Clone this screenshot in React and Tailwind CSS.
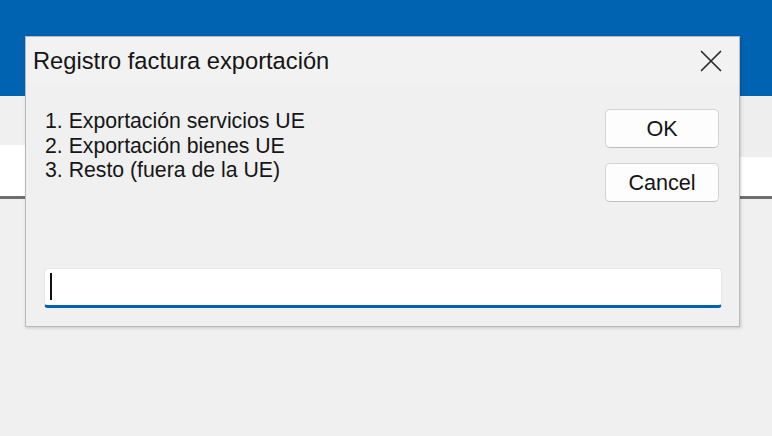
import React from "react";

const font = { fontFamily: '"Liberation Sans", Arial, sans-serif' };

function CloseIcon() {
  return (
    <svg width="22" height="22" viewBox="0 0 22 22" className="mt-[2px] shrink-0">
      <path d="M1.5 1.5 L20.5 20.5 M20.5 1.5 L1.5 20.5" stroke="#2b2b2b" strokeWidth="1.7" strokeLinecap="round" />
    </svg>
  );
}

function DialogButton({ children }) {
  return (
    <button className="h-[39px] w-[114px] rounded-[5px] border border-[#d3d3d3] border-b-[#bdbdbd] bg-[#fdfdfd] text-[21.6px] leading-none text-[#141414]">
      {children}
    </button>
  );
}

export default function App() {
  const options = [
    "1. Exportación servicios UE",
    "2. Exportación bienes UE",
    "3. Resto (fuera de la UE)",
  ];

  return (
    <div className="relative h-[436px] w-[772px] overflow-hidden bg-[#f0f0f0]" style={font}>
      {/* Background application window */}
      <div className="h-[96px] bg-[#0063b1]" />
      <div className="flex h-[100px]">
        <div className="flex w-[25px] flex-col">
          <div className="h-[49px] bg-[#f0f0f0]" />
          <div className="flex-1 bg-white" />
        </div>
        <div className="flex-1" />
        <div className="flex w-[32px] flex-col">
          <div className="h-[61px] bg-[#eeeeee]" />
          <div className="flex-1 bg-white" />
        </div>
      </div>
      <div className="h-[3px] bg-[#6f6f6f]" />

      {/* Dialog */}
      <div className="absolute left-[25px] top-[36px] flex h-[291px] w-[715px] flex-col border border-[#b9b9b9] bg-[#f0f0f0] shadow-[1px_1px_3px_rgba(0,0,0,0.18)]">
        <div className="flex h-[46px] items-start justify-between bg-[#f2f2f2] pl-[7px] pr-[17px] pt-[11px]">
          <span className="text-[23.7px] leading-[27px] text-[#151515]">Registro factura exportación</span>
          <CloseIcon />
        </div>

        <div className="flex justify-between pl-[19px] pr-[20px] pt-[26px]">
          <div className="text-[21.25px] leading-[24.6px] text-[#161616]">
            {options.map((o) => (
              <div key={o}>{o}</div>
            ))}
          </div>
          <div className="flex flex-col gap-[15px]">
            <DialogButton>OK</DialogButton>
            <DialogButton>Cancel</DialogButton>
          </div>
        </div>

        <div className="ml-[18px] mr-[17px] mt-[66px] flex h-[40px] items-start rounded-[4px] border border-[#e6e6e6] border-b-[3px] border-b-[#0063b1] bg-white">
          <span className="ml-[5px] mt-[4px] h-[27px] w-[2px] bg-[#111]" />
        </div>
      </div>
    </div>
  );
}
